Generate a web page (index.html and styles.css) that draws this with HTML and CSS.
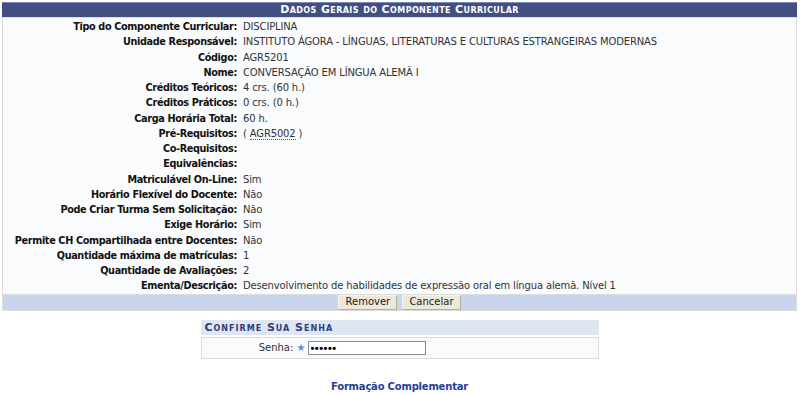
FILE: index.html
```html
<!DOCTYPE html>
<html>
<head>
    <meta charset="utf-8">
    <title>Componente Curricular</title>
    <link rel="stylesheet" href="styles.css">
</head>
<body>
    <div class="pagina">
        <table class="formulario">
            <caption>Dados Gerais do Componente Curricular</caption>
            <tbody>
                <tr class="primeira"><th>Tipo do Componente Curricular:</th><td>DISCIPLINA</td></tr>
                <tr><th>Unidade Responsável:</th><td>INSTITUTO ÁGORA - LÍNGUAS, LITERATURAS E CULTURAS ESTRANGEIRAS MODERNAS</td></tr>
                <tr><th>Código:</th><td>AGR5201</td></tr>
                <tr><th>Nome:</th><td>CONVERSAÇÃO EM LÍNGUA ALEMÃ I</td></tr>
                <tr><th>Créditos Teóricos:</th><td>4 crs. (60 h.)</td></tr>
                <tr><th>Créditos Práticos:</th><td>0 crs. (0 h.)</td></tr>
                <tr><th>Carga Horária Total:</th><td>60 h.</td></tr>
                <tr><th>Pré-Requisitos:</th><td>( <acronym class="sigla" title="Idioma Alemão">AGR5002</acronym> )</td></tr>
                <tr><th>Co-Requisitos:</th><td></td></tr>
                <tr><th>Equivalências:</th><td></td></tr>
                <tr><th>Matriculável On-Line:</th><td>Sim</td></tr>
                <tr><th>Horário Flexível do Docente:</th><td>Não</td></tr>
                <tr><th>Pode Criar Turma Sem Solicitação:</th><td>Não</td></tr>
                <tr><th>Exige Horário:</th><td>Sim</td></tr>
                <tr><th>Permite CH Compartilhada entre Docentes:</th><td>Não</td></tr>
                <tr><th>Quantidade máxima de matrículas:</th><td>1</td></tr>
                <tr><th>Quantidade de Avaliações:</th><td>2</td></tr>
                <tr><th>Ementa/Descrição:</th><td>Desenvolvimento de habilidades de expressão oral em língua alemã. Nível 1</td></tr>
            </tbody>
            <tfoot>
                <tr>
                    <td colspan="2">
                        <input type="button" class="botao" value="Remover">
                        <input type="button" class="botao" value="Cancelar">
                    </td>
                </tr>
            </tfoot>
        </table>

        <table class="senha">
            <caption>Confirme Sua Senha</caption>
            <tr>
                <th>Senha: <span class="obrigatorio">&#9733;</span></th>
                <td><input type="password" class="campo" value="123456"></td>
            </tr>
        </table>

        <div class="rodape">
            <a href="#">Formação Complementar</a>
        </div>
    </div>
</body>
</html>
```

FILE: styles.css
```css
body {
    margin: 0;
    background: #fff;
    font-family: Verdana, "DejaVu Sans", sans-serif;
    font-size: 10px;
    color: #222;
}

.pagina {
    padding: 2px 3px 0 2px;
}

/* tabela de dados */
table.formulario {
    width: 100%;
    border-collapse: collapse;
    border: 1px solid #dcdcdc;
    background: #f9fbfd;
}

table.formulario caption {
    background: #414f83;
    border-top: 1px solid #7d88ad;
    color: #fff;
    font-size: 11px;
    font-weight: bold;
    font-variant: small-caps;
    letter-spacing: 0.4px;
    line-height: 14px;
}

table.formulario th {
    width: 234px;
    text-align: right;
    font-size: 9.7px;
    font-weight: bold;
    letter-spacing: -0.35px;
    white-space: nowrap;
    padding: 1px 3px 1px 0;
    line-height: 13.25px;
    color: #111;
}

table.formulario td {
    padding: 1px 2px 1px 3px;
    letter-spacing: -0.15px;
    line-height: 13.25px;
    color: #333;
}

table.formulario tr.primeira th,
table.formulario tr.primeira td {
    padding-top: 2px;
}

.sigla {
    text-decoration: none;
    border-bottom: 1px dotted #555;
}

table.formulario tfoot td {
    background: #c8d5ec;
    text-align: center;
    padding: 0;
    border-top: 1px solid #dcdcdc;
    letter-spacing: 0;
}

.botao {
    font-family: Verdana, "DejaVu Sans", sans-serif;
    font-size: 10px;
    color: #222;
    background: #ece9d8;
    border: 1px solid #b4ae98;
    border-top-color: #f6f4ec;
    border-left-color: #f6f4ec;
    padding: 0 6px;
    height: 15px;
    line-height: 12px;
    margin: 0 1px;
}

/* confirmacao de senha */
table.senha {
    width: 398px;
    margin: 9px auto 0 auto;
    border-collapse: collapse;
    border: 1px solid #dcdcdc;
    background: #f9fbfd;
}

table.senha caption {
    background: #dfe5f1;
    color: #2b3f7a;
    font-size: 11px;
    font-weight: bold;
    font-variant: small-caps;
    letter-spacing: 1px;
    text-align: left;
    padding: 1px 0 1px 4px;
    line-height: 13px;
    border-bottom: 2px solid #fff;
}

table.senha th {
    width: 104px;
    text-align: right;
    font-weight: normal;
    white-space: nowrap;
    padding: 3px 2px 3px 0;
    color: #333;
}

table.senha td {
    padding: 3px 0;
}

.obrigatorio {
    color: #5b8cd9;
    font-size: 10px;
}

.campo {
    width: 112px;
    height: 10px;
    font-size: 11px;
    font-weight: bold;
    letter-spacing: 0.5px;
    padding: 1px 2px;
    border: 1px solid #8a8a8a;
    background: #fff;
    color: #000;
}

.rodape {
    text-align: center;
    margin-top: 22px;
}

.rodape a {
    color: #1f409a;
    font-weight: bold;
    letter-spacing: -0.2px;
    text-decoration: none;
}
```
